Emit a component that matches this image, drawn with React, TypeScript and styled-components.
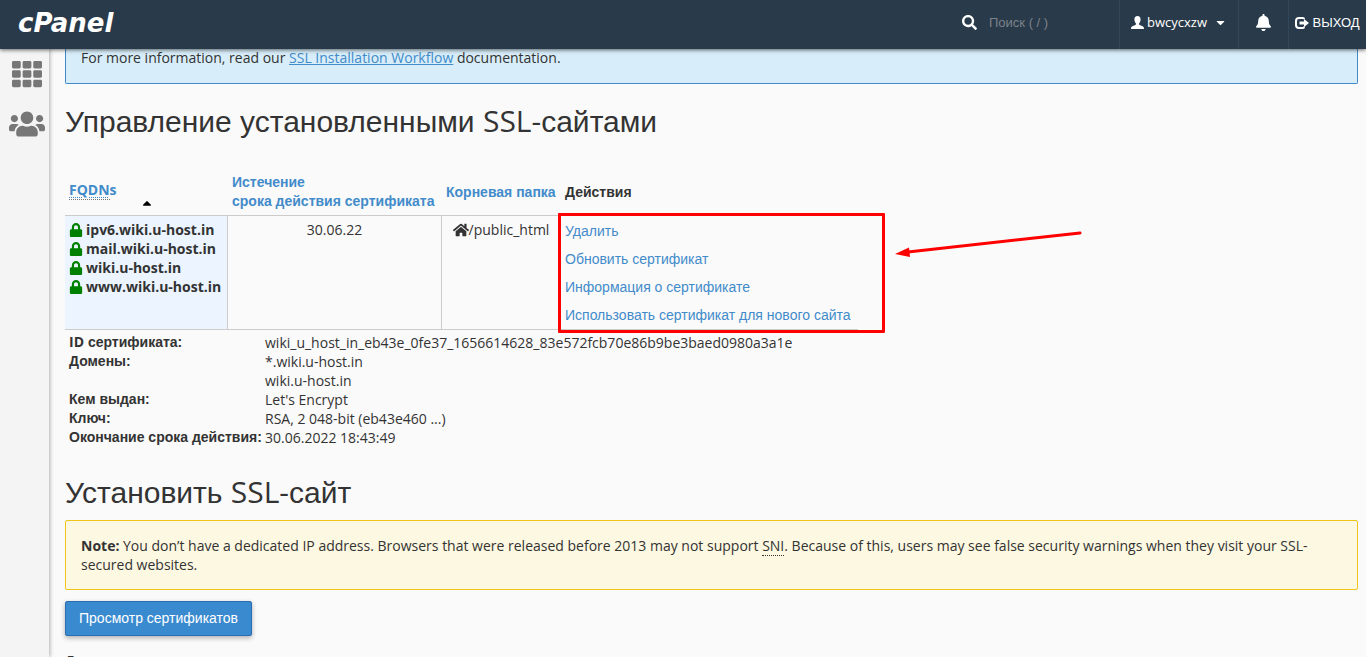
import React from "react";
import styled, { createGlobalStyle } from "styled-components";
import { FaTh, FaUsers, FaSearch, FaBell, FaHome, FaLock, FaCaretDown, FaCaretUp } from "react-icons/fa";

const latin = '"Open Sans", sans-serif';
const cyrillic = '"Liberation Sans", Arial, sans-serif';

const GlobalStyle = createGlobalStyle`
  *, *::before, *::after { box-sizing: border-box; }
  body {
    margin: 0;
    background: #fafafa;
    color: #333;
    font: 14px/19px ${latin};
  }
  a { color: #428bca; text-decoration: none; }
`;

const Page = styled.div`
  display: flex;
  flex-direction: column;
  height: 100vh;
  overflow: hidden;
`;

const Header = styled.header`
  position: relative;
  z-index: 2;
  flex: none;
  display: flex;
  align-items: stretch;
  height: 49px;
  background: #293a4a;
  color: #fff;
  box-shadow: 0 1px 4px rgba(0, 0, 0, 0.6);
`;

const Logo = styled.a`
  flex: 1;
  padding-left: 18px;
  font: italic bold 26px/46px "DejaVu Sans", sans-serif;
  && { color: #fff; }
`;

const Search = styled.label`
  display: flex;
  align-items: center;
  gap: 12px;
  width: 157px;
  padding-bottom: 4px;
  font-size: 15px;
`;

const SearchInput = styled.input`
  width: 100px;
  padding: 0;
  border: 0;
  outline: 0;
  background: transparent;
  color: #fff;
  font: 13px/19px ${cyrillic};
  &::placeholder { color: #7c8289; opacity: 1; }
`;

const HeaderButton = styled.button<{ $width: number; $cyr?: boolean }>`
  display: flex;
  align-items: center;
  justify-content: center;
  gap: 3px;
  width: ${(p) => p.$width}px;
  padding: 0 0 4px;
  border: 0;
  border-left: 1px solid #33475a;
  background: transparent;
  color: #fff;
  font: 13px/19px ${(p) => (p.$cyr ? cyrillic : latin)};
  white-space: nowrap;
`;

const MenuCaret = styled(FaCaretDown)`
  margin-left: 4px;
`;

const Body = styled.div`
  flex: 1;
  display: flex;
  min-height: 0;
`;

const Sidebar = styled.nav`
  flex: none;
  display: flex;
  flex-direction: column;
  align-items: center;
  gap: 17px;
  width: 49px;
  padding: 10px 0 0 4px;
  background: #f4f4f4;
  box-shadow: 1px 0 4px rgba(0, 0, 0, 0.3);
`;

const SideLink = styled.a`
  display: flex;
  && { color: #777; }
`;

const Main = styled.main`
  flex: 1;
  min-width: 0;
  padding: 0 8px 0 16px;
`;

const Info = styled.div`
  margin-top: -1px;
  padding: 0 15px 16px;
  border: 1px solid #428bca;
  border-top: 0;
  border-radius: 0 0 2px 2px;
  background: #d7edf9;
  a { text-decoration: underline; }
`;

const Title = styled.h2<{ $top: number; $bottom: number }>`
  margin: ${(p) => p.$top}px 0 ${(p) => p.$bottom}px;
  font: 30px/34px ${cyrillic};
`;

const Latin = styled.span`
  font-family: ${latin};
  line-height: 1;
`;

const SiteTable = styled.table`
  width: 793px;
  border-collapse: separate;
  border-spacing: 0;
  table-layout: fixed;
`;

const HeadCell = styled.th<{ $width: number; $latin?: boolean }>`
  width: ${(p) => p.$width}px;
  height: 46px;
  padding: 3px 4px 4px;
  border-bottom: 1px solid #ccc;
  text-align: left;
  vertical-align: middle;
  white-space: nowrap;
  font: bold 14px/19px ${(p) => (p.$latin ? latin : cyrillic)};
`;

const SortLink = styled.a`
  display: flex;
  align-items: flex-end;
  gap: 23px;
  padding-bottom: 4px;
`;

const SortTerm = styled.abbr`
  display: inline-block;
  border-bottom: 1px dotted #777;
  line-height: 18px;
  text-decoration: underline dotted 1px;
  text-underline-offset: 2px;
`;

const SortCaret = styled(FaCaretUp)`
  position: relative;
  top: 10px;
  color: #000;
`;

const Cell = styled.td<{ $center?: boolean }>`
  padding: 4px;
  border-bottom: 1px solid #ccc;
  border-right: 1px solid #ccc;
  vertical-align: top;
  text-align: ${(p) => (p.$center ? "center" : "left")};
  white-space: nowrap;
`;

const HostCell = styled(Cell)`
  background: #ecf5ff;
`;

const HostList = styled.ul`
  margin: 0;
  padding: 0;
  list-style: none;
  font-weight: 700;
`;

const Host = styled.li`
  display: flex;
  align-items: center;
  gap: 3px;
  svg { color: #008000; }
`;

const Folder = styled.span`
  display: inline-flex;
  align-items: center;
`;

const ActionCell = styled.td`
  position: relative;
  padding: 1px 4px 0;
  border-bottom: 1px solid #ccc;
`;

const ActionLink = styled.a`
  display: block;
  font: 14px/28px ${cyrillic};
  white-space: nowrap;
`;

const Highlight = styled.div`
  position: absolute;
  top: -3px;
  left: -3px;
  width: 327px;
  height: 120px;
  border: 3px solid #f00;
  border-radius: 1px;
  pointer-events: none;
`;

const Arrow = styled.svg`
  position: absolute;
  top: 13px;
  left: 333px;
  pointer-events: none;
`;

const Details = styled.table`
  margin: 3px 0 0 4px;
  border-collapse: collapse;
  td, th { padding: 0; text-align: left; vertical-align: top; white-space: nowrap; }
  th { width: 196px; font: bold 14px/19px ${cyrillic}; }
`;

const Note = styled.div`
  padding: 15px;
  border: 1px solid #f0c419;
  border-radius: 2px;
  background: #fdf8e1;
  abbr { text-decoration: none; border-bottom: 1px dotted #333; }
`;

const PrimaryButton = styled.button`
  display: block;
  margin: 11px 0 16px;
  padding: 7px 13px;
  border: 1px solid #2a6db0;
  border-radius: 2px;
  background: #3a8ad0;
  box-shadow: 0 2px 5px rgba(0, 0, 0, 0.3);
  color: #fff;
  font: 14px/19px ${cyrillic};
`;

const FieldLabel = styled.label`
  display: block;
  font: bold 14px/19px ${cyrillic};
`;

const UserIcon = () => (
  <svg width="13" height="13" viewBox="0 0 13 13" fill="currentColor" aria-hidden="true">
    <path d="M6.5 0C8.5 0 9.7 1.4 9.6 3.5C9.5 5.5 8.8 6.6 8.1 7.3V8.6C8.2 9.1 11.2 9.8 12.3 10.7C12.9 11.2 13 12 13 13H0C0 12 .1 11.2.7 10.7C1.8 9.8 4.8 9.1 4.9 8.6V7.3C4.2 6.6 3.5 5.5 3.4 3.5C3.3 1.4 4.5 0 6.5 0Z" />
  </svg>
);

const LogoutIcon = () => (
  <svg width="14" height="12" viewBox="0 0 14 12" aria-hidden="true">
    <path d="M9 2.2V2Q9 1 7.8 1H4Q1 1 1 4V8Q1 11 4 11H7.8Q9 11 9 10V9.6" fill="none" stroke="currentColor" strokeWidth="2" />
    <path d="M4.5 4.5H9V2L14 6L9 10V7.500H4.500Z" fill="currentColor" />
  </svg>
);

const hosts = ["ipv6.wiki.u-host.in", "mail.wiki.u-host.in", "wiki.u-host.in", "www.wiki.u-host.in"];

const actions = [
  "Удалить",
  "Обновить сертификат",
  "Информация о сертификате",
  "Использовать сертификат для нового сайта",
];

const details: [React.ReactNode, React.ReactNode][] = [
  [<><Latin>ID</Latin> сертификата:</>, "wiki_u_host_in_eb43e_0fe37_1656614628_83e572fcb70e86b9be3baed0980a3a1e"],
  ["Домены:", <>*.wiki.u-host.in<br />wiki.u-host.in</>],
  ["Кем выдан:", "Let's Encrypt"],
  ["Ключ:", "RSA, 2 048-bit (eb43e460 ...)"],
  ["Окончание срока действия:", "30.06.2022 18:43:49"],
];

export default function App() {
  return (
    <Page>
      <GlobalStyle />
      <Header>
        <Logo href="#">cPanel</Logo>
        <Search>
          <FaSearch aria-label="Поиск" />
          <SearchInput type="text" placeholder="Поиск ( / )" />
        </Search>
        <HeaderButton $width={119}>
          <UserIcon />
          bwcycxzw
          <MenuCaret />
        </HeaderButton>
        <HeaderButton $width={50} aria-label="Уведомления">
          <FaBell size={17} />
        </HeaderButton>
        <HeaderButton $width={78} $cyr>
          <LogoutIcon />
          ВЫХОД
        </HeaderButton>
      </Header>
      <Body>
        <Sidebar>
          <SideLink href="#" aria-label="Инструменты"><FaTh size={30} /></SideLink>
          <SideLink href="#" aria-label="Пользователи"><FaUsers size={36} /></SideLink>
        </Sidebar>
        <Main>
          <Info>
            For more information, read our <a href="#">SSL Installation Workflow</a> documentation.
          </Info>
          <Title $top={21} $bottom={31}>Управление установленными <Latin>SSL-</Latin>сайтами</Title>
          <SiteTable>
            <thead>
              <tr>
                <HeadCell $width={163} $latin scope="col">
                  <SortLink href="#"><span><SortTerm>FQDN</SortTerm>s</span><SortCaret /></SortLink>
                </HeadCell>
                <HeadCell $width={214} scope="col"><a href="#">Истечение<br />срока действия сертификата</a></HeadCell>
                <HeadCell $width={119} scope="col"><a href="#">Корневая папка</a></HeadCell>
                <HeadCell $width={297} scope="col">Действия</HeadCell>
              </tr>
            </thead>
            <tbody>
              <tr>
                <HostCell>
                  <HostList>
                    {hosts.map((h) => <Host key={h}><FaLock size={14} />{h}</Host>)}
                  </HostList>
                </HostCell>
                <Cell $center>30.06.22</Cell>
                <Cell $center><Folder><FaHome size={16} />/public_html</Folder></Cell>
                <ActionCell>
                  {actions.map((a) => <ActionLink key={a} href="#">{a}</ActionLink>)}
                  <Highlight />
                  <Arrow width="190" height="32" viewBox="0 0 190 32" aria-hidden="true">
                    <path d="M14 23L186 4" stroke="#f00" strokeWidth="3" strokeLinecap="round" />
                    <path d="M1 25L15 18.500L16 28Z" fill="#f00" />
                  </Arrow>
                </ActionCell>
              </tr>
            </tbody>
          </SiteTable>
          <Details>
            <tbody>
              {details.map(([label, value], i) => (
                <tr key={i}><th scope="row">{label}</th><td>{value}</td></tr>
              ))}
            </tbody>
          </Details>
          <Title $top={29} $bottom={10}>Установить <Latin>SSL-</Latin>сайт</Title>
          <Note>
            <b>Note:</b> You don’t have a dedicated IP address. Browsers that were released before 2013 may not support <abbr>SNI</abbr>. Because of this, users may see false security warnings when they visit your SSL-secured websites.
          </Note>
          <PrimaryButton>Просмотр сертификатов</PrimaryButton>
          <FieldLabel>Домен</FieldLabel>
        </Main>
      </Body>
    </Page>
  );
}
